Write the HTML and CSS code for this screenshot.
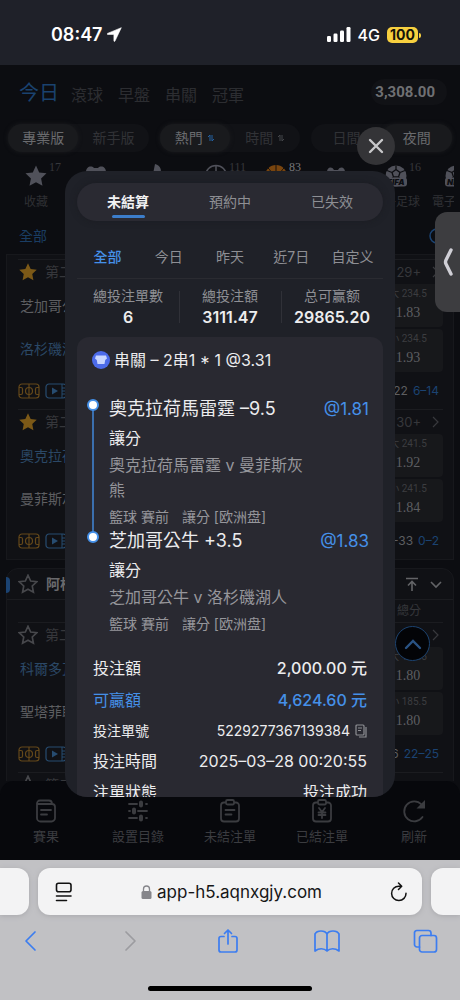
FILE: index.html
```html
<!DOCTYPE html>
<html lang="zh-Hant">
<head>
<meta charset="utf-8">
<meta name="viewport" content="width=device-width, initial-scale=1">
<title>未結算注單</title>
<link rel="stylesheet" href="styles.css">
</head>
<body>
<svg width="0" height="0" class="defs" aria-hidden="true">
  <symbol id="star" viewBox="0 0 24 24"><path d="M12 1.500l3.200 6.900 7.300.9-5.400 5.100 1.400 7.400L12 18.200l-6.500 3.600 1.400-7.400L1.500 9.300l7.300-.9z"/></symbol>
  <symbol id="court" viewBox="0 0 22 16"><g fill="none" stroke="currentColor" stroke-width="1.200"><rect x="1" y="1" width="20" height="14" rx="3"/><path d="M11 1v14M1 4.500h2a1.500 1.500 0 0 1 1.500 1.500v4a1.500 1.500 0 0 1-1.500 1.500H1M21 4.500h-2a1.500 1.500 0 0 0-1.500 1.500v4a1.500 1.500 0 0 0 1.500 1.500H21"/><circle cx="11" cy="8" r="3.500"/></g></symbol>
  <symbol id="video" viewBox="0 0 22 16"><rect x="1" y="1" width="20" height="14" rx="3" fill="none" stroke="currentColor" stroke-width="1.200"/><path d="M17 1v14M17 5h4M17 8h4M17 11h4" stroke="currentColor" fill="none"/><path d="M7 4.500v7l6-3.500z" fill="currentColor"/></symbol>
  <symbol id="sort" viewBox="0 0 8 8"><path d="M1 3l2-2v6" class="sort-up"/><path d="M5 1v6l2-2" class="sort-down"/></symbol>
  <symbol id="ball" viewBox="0 0 24 24"><circle cx="12" cy="12" r="10.500" fill="currentColor"/><path d="M12 5.500l4 3-1.500 4.500h-5L8 8.500zM12 1.500v4M16 8.500l5-2M8 8.500l-5-2M9.500 13L6 17M14.500 13l3.500 4" fill="none" stroke="#0d0e12" stroke-width="1.300"/></symbol>
</svg>
<div class="phone">
  <header class="status">
    <div class="clock">08:47
      <svg width="15" height="15" viewBox="0 0 15 15"><path d="M14.300.7L.5 6.400c-.6.3-.5 1 .2 1h6.200v6.400c0 .8.8.9 1.100.2z" fill="#fff" stroke="#fff" stroke-linejoin="round" stroke-width=".6"/></svg>
    </div>
    <div class="signals">
      <svg width="24" height="15" viewBox="0 0 24 15" fill="#fff"><rect x="0" y="9" width="4" height="6" rx="1.200"/><rect x="6.500" y="6.500" width="4" height="8.500" rx="1.200"/><rect x="13" y="3.500" width="4" height="11.500" rx="1.200"/><rect x="19.500" y="0" width="4" height="15" rx="1.200"/></svg>
      <span class="net">4G</span>
      <span class="battery">100</span>
    </div>
  </header>

  <main class="stage">
    <div class="app">
      <div class="top">
        <nav class="main-tabs">
          <button class="on">今日</button><button>滾球</button><button>早盤</button><button>串關</button><button>冠軍</button>
        </nav>
        <span class="balance">3,308.00</span>
      </div>
      <div class="switches">
        <div class="switch"><button class="on">專業版</button><button>新手版</button></div>
        <div class="switch"><button class="on">熱門<svg class="sort hot" width="8" height="8"><use href="#sort"/></svg></button><button>時間<svg class="sort" width="8" height="8"><use href="#sort"/></svg></button></div>
        <div class="switch"><button>日間</button><button class="on">夜間</button></div>
      </div>
      <div class="sports">
        <button class="sport"><svg width="24" height="24" fill="currentColor"><use href="#star"/></svg><i>17</i><span>收藏</span></button>
        <button class="sport"><svg width="24" height="24" viewBox="0 0 24 24" fill="currentColor"><path d="M2 8c0-5 5-7 8-4h4c3-3 8-1 8 4l-3 8H5z"/></svg></button>
        <button class="sport"><svg width="24" height="24" viewBox="0 0 24 24" fill="currentColor"><path d="M11 0c6 2 7 6 5 11h6v6H4c0-3 1-5 5-7z"/></svg></button>
        <button class="sport"><svg width="24" height="24" viewBox="0 0 24 24" fill="none" stroke="currentColor" stroke-width="1.500"><circle cx="12" cy="12" r="10.500"/><path d="M12 1.500v6M12 7.500l5 4-2 6H9l-2-6zM17 11.500l4-4M7 11.500l-4-4"/></svg><i>111</i></button>
        <button class="sport basket"><svg width="24" height="24" viewBox="0 0 24 24"><circle cx="12" cy="12" r="11" fill="#79450f"/><path d="M12 1v22M1 12h22M4 4c5 4 5 12 0 16M20 4c-5 4-5 12 0 16" fill="none" stroke="#17110c"/></svg><i>83</i></button>
        <button class="sport"><svg width="24" height="24" viewBox="0 0 24 24" fill="currentColor"><path d="M3 8c0-5 5-6 7-2h4c2-4 7-3 7 2v8H3z"/></svg></button>
        <button class="sport"><svg width="24" height="24" viewBox="0 0 24 24"><use href="#ball"/><rect x="1" y="13.500" width="22" height="9" rx="3" fill="currentColor"/><text x="12" y="21" class="badge-text">FIFA</text></svg><i>16</i><span>電子足球</span></button>
        <button class="sport"><svg width="24" height="24" viewBox="0 0 24 24"><use href="#ball"/><rect x="1" y="13.500" width="22" height="9" rx="3" fill="currentColor"/><text x="12" y="21" class="badge-text">NBA</text></svg><span>電子籃球</span></button>
      </div>
      <div class="leagues"><button>全部</button><svg width="18" height="18" viewBox="0 0 18 18"><circle cx="9" cy="9" r="7" fill="none" stroke="#1b4372" stroke-width="1.500"/></svg></div>

      <section class="card first">
        <article class="match">
          <div class="match-head"><svg class="gold" width="20" height="20"><use href="#star"/></svg><span>第二節</span><b>29+</b><svg class="chev" width="7" height="12" viewBox="0 0 7 12"><path d="M1 1l5 5-5 5"/></svg></div>
          <div class="match-body"><div class="teams"><p>芝加哥公牛</p><p class="blue">洛杉磯湖人</p></div>
            <div class="odds"><button><small>大 234.5</small>1.83</button><button><small>小 234.5</small>1.93</button></div></div>
          <div class="match-foot"><svg class="court" width="22" height="16"><use href="#court"/></svg><svg class="video" width="22" height="16"><use href="#video"/></svg><span>22</span><em>6–14</em></div>
        </article>
        <article class="match">
          <div class="match-head"><svg class="gold" width="20" height="20"><use href="#star"/></svg><span>第二節</span><b>30+</b><svg class="chev" width="7" height="12" viewBox="0 0 7 12"><path d="M1 1l5 5-5 5"/></svg></div>
          <div class="match-body"><div class="teams"><p class="blue">奧克拉荷馬雷霆</p><p>曼菲斯灰熊</p></div>
            <div class="odds"><button><small>大 241.5</small>1.92</button><button><small>小 241.5</small>1.84</button></div></div>
          <div class="match-foot"><svg class="court" width="22" height="16"><use href="#court"/></svg><svg class="video" width="22" height="16"><use href="#video"/></svg><span>-33</span><em>0–2</em></div>
        </article>
      </section>

      <section class="card second">
        <div class="league-head"><svg class="hollow" width="20" height="20"><use href="#star"/></svg><h2>阿根廷</h2>
          <svg width="14" height="15" viewBox="0 0 14 15" class="tool"><path d="M1 1.500h12M7 14V5M3 8.500l4-4 4 4"/></svg>
          <svg width="14" height="15" viewBox="0 0 14 15" class="tool"><path d="M2 5l5 5 5-5"/></svg></div>
        <div class="columns"><span>總分</span></div>
        <article class="match">
          <div class="match-head"><svg class="hollow" width="20" height="20"><use href="#star"/></svg><span>第二節</span><svg class="chev" width="7" height="12" viewBox="0 0 7 12"><path d="M1 1l5 5-5 5"/></svg></div>
          <div class="match-body"><div class="teams"><p class="blue">科爾多瓦</p><p>聖塔菲聯</p></div>
            <div class="odds"><button><small>大 185.5</small>1.80</button><button><small>小 185.5</small>1.80</button></div></div>
          <div class="match-foot"><svg class="court" width="22" height="16"><use href="#court"/></svg><svg class="video" width="22" height="16"><use href="#video"/></svg><span>6</span><em>22–25</em></div>
        </article>
        <article class="match">
          <div class="match-head"><svg class="hollow" width="20" height="20"><use href="#star"/></svg><span>第二節</span></div>
        </article>
      </section>
    </div>

    <nav class="dock">
      <button><svg width="26" height="26" viewBox="0 0 26 26"><path d="M4 6v14a3.500 3.500 0 0 0 3.500 3.500h11A3.500 3.500 0 0 0 22 20V9a3 3 0 0 0-3-3zM4 6c0-2 1-3.500 3-3.500h9c2 0 3 1.500 3 3.500M8 12h10M8 16.500h6"/></svg>賽果</button>
      <button><svg width="26" height="26" viewBox="0 0 26 26"><path d="M4 6h8M21 6h1M4 13h1M13 13h9M4 20h8M21 20h1"/><path d="M16 4.500v3M9 11.500v3M16 18.500v3" stroke-width="4"/></svg>設置目錄</button>
      <button><svg width="26" height="26" viewBox="0 0 26 26"><path d="M9 4.500H7a3 3 0 0 0-3 3v13a3 3 0 0 0 3 3h12a3 3 0 0 0 3-3v-13a3 3 0 0 0-3-3h-2M9 3.500a1.500 1.500 0 0 1 1.500-1.500h5A1.500 1.500 0 0 1 17 3.500v1A1.500 1.500 0 0 1 15.500 6.500h-5A1.500 1.500 0 0 1 9 5zM8.500 12h9M8.500 16.500h6"/></svg>未結注單</button>
      <button><svg width="26" height="26" viewBox="0 0 26 26"><path d="M9 4.500H7a3 3 0 0 0-3 3v13a3 3 0 0 0 3 3h12a3 3 0 0 0 3-3v-13a3 3 0 0 0-3-3h-2M9 3.500a1.500 1.500 0 0 1 1.500-1.500h5A1.500 1.500 0 0 1 17 3.500v1A1.500 1.500 0 0 1 15.500 6.500h-5A1.500 1.500 0 0 1 9 5zM10 10l3 4 3-4M9.500 14.500h7M9.500 17h7M13 14v6"/></svg>已結注單</button>
      <button><svg width="26" height="26" viewBox="0 0 26 26"><path d="M20.500 6.500A10 10 0 1 0 21.500 19"/><path d="M24 2v8.500h-8.500z" fill="#3b3c40" stroke="none"/></svg>刷新</button>
    </nav>

    <button class="to-top" aria-label="回到頂部"><svg width="18" height="12" viewBox="0 0 18 12"><path d="M2 10l7-7 7 7"/></svg></button>

    <div class="modal" role="dialog" aria-label="注單">
      <div class="seg"><button class="on">未結算</button><button>預約中</button><button>已失效</button></div>
      <div class="dates"><button class="on">全部</button><button>今日</button><button>昨天</button><button>近7日</button><button>自定义</button></div>
      <dl class="totals">
        <div><dt>總投注單數</dt><dd>6</dd></div>
        <div><dt>總投注額</dt><dd>3111.47</dd></div>
        <div><dt>总可赢额</dt><dd>29865.20</dd></div>
      </dl>
      <section class="ticket">
        <h3><svg width="18" height="18" viewBox="0 0 18 18"><circle cx="9" cy="9" r="9" fill="#4c6bea"/><path d="M4 4.500h10l1 3-1.800 1.500-.7 4H5.500l-.7-4L3 7.500z" fill="#c9d6ff"/></svg>串關 – 2串1 * 1 @3.31</h3>
        <ol class="legs">
          <li>
            <div class="leg-title"><strong>奧克拉荷馬雷霆 –9.5</strong><span>@1.81</span></div>
            <p class="market">讓分</p>
            <p class="fixture">奧克拉荷馬雷霆 v 曼菲斯灰熊</p>
            <p class="meta"><span>籃球 賽前</span><span>讓分 [欧洲盘]</span></p>
          </li>
          <li>
            <div class="leg-title"><strong>芝加哥公牛 +3.5</strong><span>@1.83</span></div>
            <p class="market">讓分</p>
            <p class="fixture">芝加哥公牛 v 洛杉磯湖人</p>
            <p class="meta"><span>籃球 賽前</span><span>讓分 [欧洲盘]</span></p>
          </li>
        </ol>
        <dl class="facts">
          <div class="money"><dt>投注額</dt><dd>2,000.00 元</dd></div>
          <div class="money win"><dt>可贏額</dt><dd>4,624.60 元</dd></div>
          <div class="serial"><dt>投注單號</dt><dd>5229277367139384<button aria-label="複製"><svg width="12" height="14" viewBox="0 0 12 14"><rect x="1" y="1" width="8" height="10" rx="1"/><path d="M3 4h4M3 6.500h3M11 3v10H4"/></svg></button></dd></div>
          <div><dt>投注時間</dt><dd>2025–03–28 00:20:55</dd></div>
          <div><dt>注單狀態</dt><dd>投注成功</dd></div>
        </dl>
      </section>
    </div>
    <button class="close" aria-label="關閉"><svg width="16" height="16" viewBox="0 0 16 16"><path d="M2 2l12 12M14 2L2 14"/></svg></button>
    <button class="handle" aria-label="展開"><svg width="10" height="28" viewBox="0 0 10 28"><path d="M8 2L3 12q-1 2 0 4l5 10"/></svg></button>
  </main>

  <footer class="browser">
    <div class="tabs">
      <div class="side left"></div>
      <div class="address">
        <button aria-label="頁面選單"><svg width="18" height="20" viewBox="0 0 18 20" fill="none" stroke="#111" stroke-width="1.600" stroke-linecap="round"><rect x="1.500" y="1.300" width="14.500" height="8.500" rx="2"/><path d="M1.500 14H16M1.500 18.500h10"/></svg></button>
        <a href="#"><svg width="11" height="14" viewBox="0 0 11 14"><rect x=".5" y="6" width="10" height="8" rx="1.500" fill="#85858a"/><path d="M2.500 6V4a3 3 0 0 1 6 0v2" fill="none" stroke="#85858a" stroke-width="1.300"/></svg>app-h5.aqnxgjy.com</a>
        <button aria-label="重新載入"><svg width="18" height="20" viewBox="0 0 18 20" fill="none" stroke="#111" stroke-width="1.500" stroke-linecap="round" stroke-linejoin="round"><path d="M16 11.200A7.200 7.200 0 1 1 8.800 4.200h2.700M8.500 1l3.200 3.200L8.500 7.500"/></svg></button>
      </div>
      <div class="side right"></div>
    </div>
    <nav class="tools">
      <button aria-label="返回"><svg width="26" height="26" viewBox="0 0 26 26"><path d="M17 4l-9 9 9 9"/></svg></button>
      <button aria-label="前進" class="off"><svg width="26" height="26" viewBox="0 0 26 26"><path d="M9 4l9 9-9 9"/></svg></button>
      <button aria-label="分享"><svg width="26" height="26" viewBox="0 0 26 26"><path d="M9 8.500H6a2 2 0 0 0-2 2V22a2 2 0 0 0 2 2h14a2 2 0 0 0 2-2V10.500a2 2 0 0 0-2-2h-3M13 16V2M9.500 5.500L13 2l3.500 3.500"/></svg></button>
      <button aria-label="書籤"><svg width="26" height="26" viewBox="0 0 26 26"><path d="M13 6v17c-3-3-8-3-12 0V6c2-4 10-4 12 0c2-4 10-4 12 0v17c-4-3-9-3-12 0"/></svg></button>
      <button aria-label="分頁"><svg width="26" height="26" viewBox="0 0 26 26"><rect x="7.500" y="7.500" width="17" height="16.500" rx="2.500"/><path d="M7.500 19H5a2.500 2.500 0 0 1-2.500-2.500v-11A2.500 2.500 0 0 1 5 2.500h11.500A2.500 2.500 0 0 1 19 5v2.500"/></svg></button>
    </nav>
    <div class="home"></div>
  </footer>
</div>
</body>
</html>
```

FILE: styles.css
```css
*, *::before, *::after { box-sizing: border-box; }
body, p, h2, h3, dl, dd, ol { margin: 0; padding: 0; }
body {
  background: #0d0e12;
  font-family: Inter, "Noto Sans CJK TC", sans-serif;
  font-size: 14px;
  line-height: 20px;
}
button {
  margin: 0; padding: 0; border: 0; background: none; color: inherit;
  font: inherit; cursor: pointer; white-space: nowrap;
}
svg { flex: none; display: block; }
.defs { position: absolute; }
.phone { display: flex; flex-direction: column; height: 100vh; overflow: hidden; }

/* Status bar */
.status {
  display: flex; justify-content: space-between; align-items: center;
  height: 65px; flex: none; padding: 4px 42px 0 51px;
  background: #1f2129; color: #fff;
}
.clock { display: flex; align-items: center; gap: 4px; font-size: 18px; font-weight: 600; }
.signals { display: flex; align-items: center; gap: 7px; }
.net { font-size: 16px; font-weight: 500; }
.battery {
  position: relative; padding: 0 3px; border-radius: 5px; background: #f7d03f;
  color: #15130a; font-size: 14px; font-weight: 700; line-height: 16px;
}
.battery::after {
  content: ""; position: absolute; right: -3px; top: 6px; width: 2px; height: 5px;
  border-radius: 0 2px 2px 0; background: #f7d03f;
}

/* Dimmed page */
.stage { position: relative; flex: 1; min-height: 0; display: flex; flex-direction: column; background: #0c0d11; }
.app { flex: 1; min-height: 0; overflow: hidden; padding: 0 6px; color: #36373b; }
.top { display: flex; justify-content: space-between; align-items: center; height: 54px; padding: 0 7px 0 13px; }
.main-tabs { display: flex; align-items: center; gap: 15px; font-size: 16px; padding-top: 6px; }
.main-tabs button { color: #2c2d31; }
.main-tabs .on { color: #1a426f; font-size: 20px; margin-right: -3px; padding-bottom: 4px; }
.balance { padding: 0 12px 0 4px; border-radius: 13px; background: #111216; color: #6f7073; font: 700 15px/26px Roboto, sans-serif; }
.switches { display: grid; grid-template-columns: repeat(3, 1fr); gap: 11px; padding: 5px 2px 0; }
.switch { display: grid; grid-template-columns: 1fr 1fr; height: 28px; border-radius: 14px; background: #111216; }
.switch button { display: flex; justify-content: center; align-items: center; gap: 4px; color: #313236; border-radius: 14px; }
.switch .on { background: #191a1d; color: #6a6b6e; box-shadow: 0 0 4px #1b1c1f; }
.sort { fill: none; stroke: #45464a; }
.hot { stroke: #2560a0; }
.sports { display: flex; height: 62px; padding-top: 12px; overflow: hidden; }
.sport { flex: 0 0 60px; position: relative; display: flex; flex-direction: column; align-items: center; gap: 4px; font-size: 12px; color: #50515a; }
.sport span { color: #2f3034; }
.sport i { position: absolute; left: 43px; top: -5px; font: 12px/16px "Liberation Serif", serif; color: #36373b; }
.basket i { color: #77787b; }
.badge-text { font: italic 900 8px Inter, sans-serif; text-anchor: middle; fill: #0d0e12; }
.leagues { display: flex; justify-content: space-between; align-items: center; height: 40px; padding: 4px 8px 0 13px; color: #1a3d63; }
.card { border: 1px solid #17181c; background: #101115; padding: 0 10px 0 11px; }
.first { padding-top: 4px; height: 306px; }
.match { border-top: 1px solid #1b1c20; }
.match-head { display: flex; align-items: center; height: 24px; gap: 7px; }
.match-head b { margin-left: auto; margin-right: 4px; font-size: 13px; font-weight: 400; }
.match-head .chev { margin-right: 4px; }
.match-head .chev:nth-child(3) { margin-left: auto; }
.chev { fill: none; stroke: #38393d; stroke-width: 1.2; }
.gold { fill: #7c5917; }
.hollow { fill: none; stroke: #47484c; stroke-width: 2; }
.match-body { display: flex; justify-content: space-between; }
.teams { display: grid; grid-template-rows: 43px 43px; align-items: center; padding: 0 2px; color: #5d5e61; }
.teams .blue { color: #2b4866; }
.odds { display: grid; grid-template-rows: 43px 43px; gap: 2px; width: 70px; }
.odds button { display: flex; flex-direction: column; align-items: center; background: #17181b; border-radius: 4px; color: #5d5e61; font: 14px/18px "Liberation Serif", serif; }
.odds small { color: #3c3d40; font: 10px/20px Roboto, "Noto Sans CJK TC", sans-serif; }
.match-foot { display: flex; align-items: center; height: 37px; gap: 5px; font-size: 12px; color: #5d5e61; }
.match-foot span { margin-left: auto; }
.match-foot em { font-style: normal; color: #1b4372; margin-right: 4px; }
.court { color: #64481a; }
.video { color: #274c70; }
.second { margin-top: 8px; border-radius: 12px 12px 0 0; }
.league-head { position: relative; display: flex; align-items: center; height: 30px; gap: 8px; }
.league-head::before { content: ""; position: absolute; left: -12px; top: 8px; width: 4px; height: 16px; border-radius: 0 4px 4px 0; background: #1b4372; }
.league-head h2 { margin-right: auto; font-size: 14px; color: #69696c; }
.league-head .tool + .tool { margin-left: 2px; }
.tool { fill: none; stroke: #636467; stroke-width: 1.600; }
.columns { margin: 0 -10px 0 -11px; padding: 0 32px; border-top: 1px solid #1b1c20; height: 23px; display: flex; align-items: center; justify-content: flex-end; font-size: 12px; }

.dock { display: grid; grid-template-columns: repeat(5, 1fr); height: 79px; flex: none; padding-top: 17px; border-radius: 14px 14px 0 0; background: #07080c; color: #3b3c40; font-size: 13px; }
.dock button { display: flex; flex-direction: column; align-items: center; gap: 2px; }
.dock svg { fill: none; stroke: #3b3c40; stroke-width: 1.800; stroke-linecap: round; }
.to-top { position: absolute; right: 30px; bottom: 199px; width: 35px; height: 35px; display: grid; place-items: center; border: 1px solid #1c4370; border-radius: 50%; background: #030407; }
.to-top svg { fill: none; stroke: #2a5384; stroke-width: 2.400; stroke-linecap: round; }

/* Dialog */
.modal {
  position: absolute; top: 106px; left: 65px; right: 65px; bottom: 63px;
  display: flex; flex-direction: column; overflow: hidden; padding: 12px 12px 0;
  border-radius: 22px; background: #1f2128; color: #8e8f94;
}
.seg { display: grid; grid-template-columns: repeat(3, 1fr); flex: none; height: 38px; border-radius: 19px; background: #2a2a32; box-shadow: 0 0 6px #1b1c22; }
.seg .on { position: relative; color: #f2f2f3; font-weight: 700; }
.seg .on::after { content: ""; position: absolute; left: 50%; bottom: 3px; width: 33px; height: 3px; margin-left: -16px; border-radius: 2px; background: #3c7dca; }
.dates { display: grid; grid-template-columns: repeat(5, 1fr); flex: none; height: 58px; padding-top: 15px; border-bottom: 1px solid #2a2b31; }
.dates .on { color: #4590e8; font-weight: 500; }
.totals { display: grid; grid-template-columns: repeat(3, 1fr); flex: none; padding: 7px 0 9px; text-align: center; }
.totals div { position: relative; }
.totals div + div::before { content: ""; position: absolute; left: 0; top: 5px; width: 1px; height: 32px; background: #303138; }
.totals dt { line-height: 20px; }
.totals dd { color: #ededee; font-size: 16px; font-weight: 600; line-height: 22px; }
.ticket { flex: 1; min-height: 0; padding: 12px 16px 0; border-radius: 12px 12px 0 0; background: #292931; color: #ececee; }
.ticket h3 { display: flex; align-items: center; gap: 4px; margin-left: -1px; font-size: 16px; line-height: 22px; font-weight: 400; }
.legs { list-style: none; padding: 24px 0 0 16px; }
.legs li { position: relative; }
.legs li::before { content: ""; position: absolute; z-index: 1; left: -22px; top: 4px; width: 12px; height: 12px; border: 2px solid #4590e8; border-radius: 50%; background: #fff; }
.legs li:first-child::after { content: ""; position: absolute; left: -17px; top: 8px; bottom: -8px; width: 2px; background: #3b6fae; }
.leg-title { display: flex; justify-content: space-between; margin-right: -2px; font-size: 17px; line-height: 28px; }
.leg-title strong { font-size: 18px; font-weight: 400; }
.leg-title span { color: #4590e8; }
.market { font-size: 16px; line-height: 30px; }
.fixture { max-width: 208px; font-size: 16px; line-height: 25px; color: #96969b; }
.meta { display: flex; gap: 13px; padding-top: 4px; line-height: 20px; color: #96969b; }
.facts { padding-top: 18px; font-size: 16px; }
.facts div { display: flex; justify-content: space-between; align-items: center; line-height: 31px; }
.facts .money { line-height: 32px; }
.money dd { font-weight: 500; }
.facts .win { color: #4590e8; }
.facts .serial { font-size: 14px; line-height: 30px; }
.serial dd { display: flex; align-items: center; gap: 5px; }
.serial svg { fill: none; stroke: #8e8f94; stroke-width: 1.200; }

.close { position: absolute; right: 65px; top: 62px; width: 38px; height: 38px; display: grid; place-items: center; border-radius: 50%; background: #343437; }
.close svg { fill: none; stroke: #c8c8ca; stroke-width: 2.400; stroke-linecap: round; }
.handle { position: absolute; right: 0; top: 147px; width: 25px; height: 100px; display: grid; place-items: center; border-radius: 12px 0 0 12px; background: #3d3d40; }
.handle svg { fill: none; stroke: #d0cfd6; stroke-width: 3.400; stroke-linecap: round; stroke-linejoin: round; }

/* Browser chrome */
.browser { flex: none; display: flex; flex-direction: column; height: 140px; padding-top: 8px; background: #c1c1c4; }
.tabs { display: flex; gap: 9px; height: 47px; }
.side { flex: 0 0 29px; background: #f3f3f4; box-shadow: 0 1px 5px #a9a9ad; }
.left { border-radius: 0 12px 12px 0; }
.right { border-radius: 12px 0 0 12px; }
.address { flex: 1; display: flex; justify-content: space-between; align-items: center; padding: 0 14px 0 17px; border-radius: 12px; background: #f3f3f4; box-shadow: 0 1px 5px #a9a9ad; }
.address a { display: flex; align-items: center; gap: 5px; color: #161617; font-size: 17px; text-decoration: none; }
.tools { display: flex; justify-content: space-between; padding: 13px 22px 0 18px; }
.tools svg { fill: none; stroke: #3c7df0; stroke-width: 1.700; stroke-linecap: round; stroke-linejoin: round; }
.tools .off svg { stroke: #9c9ca0; }
.home { width: 164px; height: 5px; margin: auto auto 9px; border-radius: 3px; background: #000; }
```
